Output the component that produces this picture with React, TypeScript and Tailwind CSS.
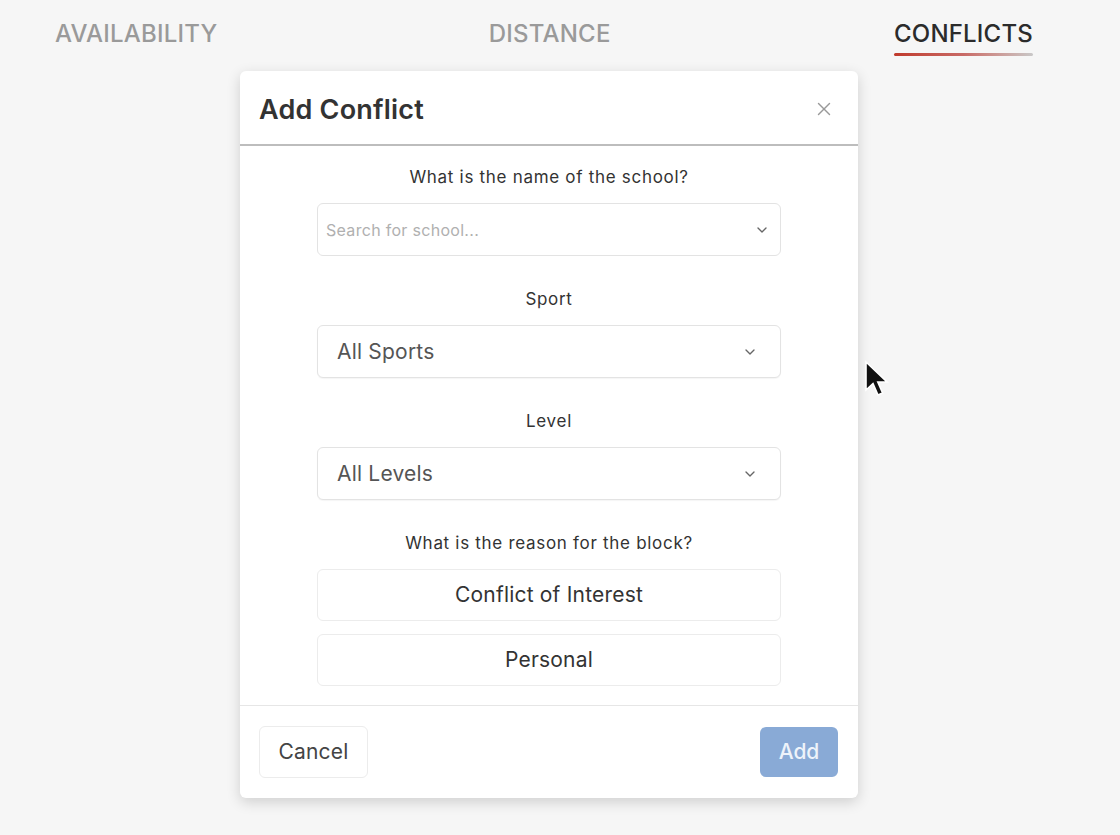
import { ChevronDown, X } from "lucide-react"

function Label({ children }: { children: string }) {
  return <div className="text-center text-[17px] leading-6 tracking-[0.7px] text-[#333] mb-[14px]">{children}</div>
}

function Select({ value }: { value: string }) {
  return (
    <div className="h-[53px] rounded-md border border-[#e3e3e3] bg-white flex items-center justify-between pl-[19px] pr-[22px] shadow-[0_1px_1px_rgba(0,0,0,0.04)]">
      <span className="text-[21px] tracking-[0.2px] text-[#555]">{value}</span>
      <ChevronDown className="h-4 w-4 text-[#666]" strokeWidth={2} />
    </div>
  )
}

export default function App() {
  const tabs = ["Availability", "Distance", "Conflicts"]
  const active = "Conflicts"

  return (
    <div className="relative min-h-[835px] w-full bg-[#f6f6f6] font-['Inter',sans-serif] overflow-hidden">
      <div className="flex justify-between pl-[55px] pr-[87px] pt-[19px]">
        {tabs.map((t) => (
          <div key={t} className={"flex flex-col items-stretch " + (t === "Distance" ? "mr-[12px]" : "")}>
            <span
              className={
                "uppercase text-[24px] leading-[30px] font-medium tracking-[0.2px] " +
                (t === active ? "text-[#2b2b2b]" : "text-[#9a9a9a]")
              }
            >
              {t}
            </span>
            {t === active && (
              <div className="mt-[4px] h-[3px] rounded-full bg-gradient-to-r from-[#c0392b] via-[#c86a66] to-[#c8c8c8]" />
            )}
          </div>
        ))}
      </div>

      <div className="ml-[240px] mt-[15px] w-[618px] rounded-md bg-white shadow-[0_4px_14px_rgba(0,0,0,0.16)]">
        <div className="flex items-center justify-between h-[75px] px-[19px] border-b-2 border-[#bdbdbd]">
          <h2 className="mt-[6px] text-[27px] font-semibold tracking-[0.2px] text-[#333]">Add Conflict</h2>
          <X className="mt-[2px] h-[22px] w-[22px] text-[#999] mr-[4px]" strokeWidth={1.5} />
        </div>

        <div className="px-[77px] pt-[19px] pb-[19px] border-b border-[#e6e6e6]">
          <Label>What is the name of the school?</Label>
          <div className="h-[53px] rounded-md border border-[#e3e3e3] bg-white flex items-center justify-between pl-[8px] pr-[10px]">
            <span className="text-[16px] tracking-[0.3px] text-[#b0b0b0]">Search for school...</span>
            <ChevronDown className="h-4 w-4 text-[#666]" strokeWidth={2} />
          </div>

          <div className="mt-[31px]">
            <Label>Sport</Label>
            <Select value="All Sports" />
          </div>

          <div className="mt-[31px]">
            <Label>Level</Label>
            <Select value="All Levels" />
          </div>

          <div className="mt-[31px]">
            <Label>What is the reason for the block?</Label>
            <div className="flex flex-col gap-[13px]">
              <button className="h-[52px] rounded-md border border-[#ececec] bg-white text-[21px] tracking-[0.2px] text-[#333]">
                Conflict of Interest
              </button>
              <button className="h-[52px] rounded-md border border-[#ececec] bg-white text-[21px] tracking-[0.2px] text-[#333]">
                Personal
              </button>
            </div>
          </div>
        </div>

        <div className="flex items-center justify-between h-[92px] px-[19px] pr-[20px]">
          <button className="h-[52px] w-[109px] rounded-md border border-[#ececec] bg-white text-[21px] tracking-[0.2px] text-[#444]">
            Cancel
          </button>
          <button className="h-[50px] w-[78px] rounded-md bg-[#89aad6] text-[21px] font-medium text-[#eef3fa]">
            Add
          </button>
        </div>
      </div>

      <svg className="absolute left-[864px] top-[360px]" width="26" height="38" viewBox="0 0 13 19">
        <path d="M1 1 L1 15 L4.5 11.8 L7 17.5 L9.3 16.5 L6.9 11 L11.5 11 Z" fill="#111" stroke="#fff" strokeWidth="0.8" />
      </svg>
    </div>
  )
}
